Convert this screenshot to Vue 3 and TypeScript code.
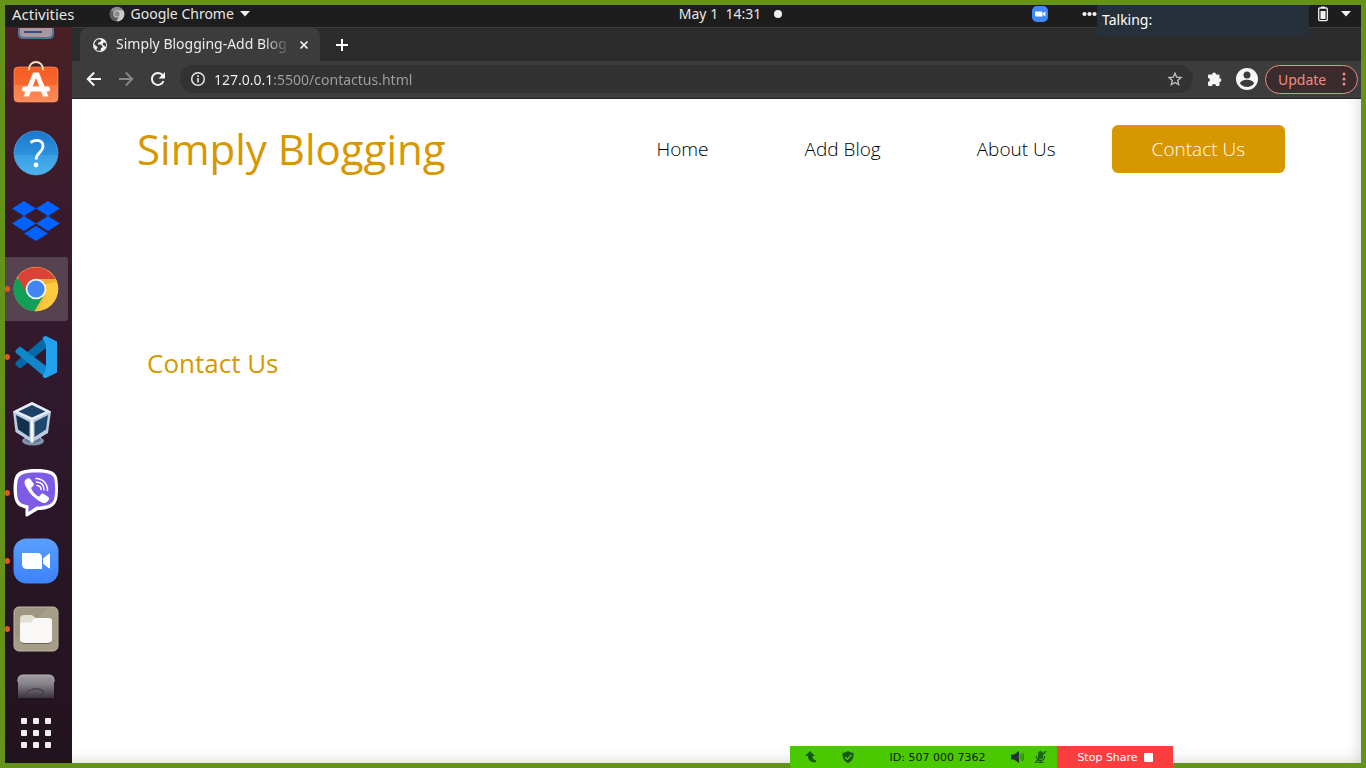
<script setup lang="ts">
import { ref } from 'vue'

interface NavLink {
  label: string
  href: string
  active?: boolean
}

const links: NavLink[] = [
  { label: 'Home', href: '#home' },
  { label: 'Add Blog', href: '#add' },
  { label: 'About Us', href: '#about' },
  { label: 'Contact Us', href: '#contact', active: true },
]

const address = ref('127.0.0.1:5500/contactus.html')
const gridDots = [0, 1, 2, 3, 4, 5, 6, 7, 8]
</script>

<template>
  <div class="screen">
    <header class="topbar">
      <div class="top-left">
        <button class="top-btn activities" type="button">Activities</button>
        <button class="top-btn app-menu" type="button">
          <svg width="16" height="16" viewBox="0 0 16 16" aria-hidden="true">
            <circle cx="8" cy="8" r="7.3" fill="#8c8c8c" />
            <path d="M8 8 1.8 4.2A7.3 7.3 0 0 0 7 15.2l3-5.2z" fill="#5e5e5e" />
            <path d="M8 4.5h6.4A7.3 7.3 0 0 1 7.6 15.3L11 9.5z" fill="#c9c9c9" />
            <circle cx="8" cy="8" r="3.6" fill="#d5d5d5" />
            <circle cx="8" cy="8" r="2.7" fill="#8a8a8a" />
          </svg>
          <span>Google Chrome</span>
          <svg width="10" height="6" viewBox="0 0 10 6" aria-hidden="true"><path d="M0 0h10L5 5.5z" fill="#f0f0f0" /></svg>
        </button>
      </div>
      <button class="top-btn clock" type="button">
        <span>May 1&nbsp; 14:31</span><i class="notice"></i>
      </button>
      <div class="top-right">
        <svg class="tray-zoom" width="16" height="16" viewBox="0 0 16 16" aria-hidden="true">
          <rect width="16" height="16" rx="5" fill="#4087fc" />
          <path d="M3 5.5h6.2c.8 0 1.3.5 1.3 1.3v3.7H4.4c-.8 0-1.4-.5-1.4-1.3zM11 7.3l2.4-1.7v4.8L11 8.8z" fill="#fff" />
        </svg>
        <svg class="tray-more" width="15" height="6" viewBox="0 0 15 6" aria-hidden="true">
          <g fill="#f2f2f2"><circle cx="2.5" cy="3" r="2.1" /><circle cx="7.5" cy="3" r="2.1" /><circle cx="12.5" cy="3" r="2.1" /></g>
        </svg>
        <svg width="10" height="16" viewBox="0 0 10 16" aria-hidden="true">
          <path d="M3 .5h4v1.5H3z" fill="#f2f2f2" />
          <rect x=".7" y="2" width="8.6" height="12.6" rx="1" fill="none" stroke="#f2f2f2" stroke-width="1.3" />
          <path d="M2.5 5h5v8h-5z" fill="#f2f2f2" />
        </svg>
        <svg width="10" height="6" viewBox="0 0 10 6" aria-hidden="true"><path d="M0 0h10L5 5.5z" fill="#f2f2f2" /></svg>
      </div>
    </header>

    <div class="desktop">
      <nav class="dock" aria-label="Dock">
        <button class="slot slot-top" type="button" aria-label="Writer">
          <svg width="48" height="14" viewBox="0 0 48 14">
            <path d="M6 0h36v6q0 5-5 5H11q-5 0-5-5z" fill="#4b7899" />
            <path d="M8 0h32v5q0 4-4 4H12q-4 0-4-4z" fill="#a9989f" />
            <path d="M12 3h18v2H12z" fill="#3b4c78" />
          </svg>
        </button>

        <button class="slot" type="button" aria-label="Ubuntu Software">
          <svg width="48" height="48" viewBox="0 0 48 48">
            <defs><linearGradient id="bag" x2="0" y2="1"><stop offset="0" stop-color="#f55c22" /><stop offset=".5" stop-color="#f8672e" /><stop offset=".51" stop-color="#f97b45" /><stop offset="1" stop-color="#fb8b58" /></linearGradient></defs>
            <rect x="2" y="6" width="44" height="35" rx="4" fill="url(#bag)" stroke="#ffa070" stroke-width=".6" />
            <path d="M17 8.500C17-1.500 31-1.500 31 8.500" fill="none" stroke="#fbe0b4" stroke-width="2" stroke-linecap="round" />
            <path d="M21 11.500h6l9.500 24H31L24 17l-7 18.500h-5.500z" fill="#fffaf6" />
            <rect x="10" y="25.500" width="28" height="5" rx="2.500" fill="#fff" />
          </svg>
        </button>

        <button class="slot" type="button" aria-label="Help">
          <svg width="48" height="48" viewBox="0 0 48 48">
            <defs><linearGradient id="help" x2="0" y2="1"><stop offset="0" stop-color="#1b77cf" /><stop offset=".54" stop-color="#2d92dd" /><stop offset=".55" stop-color="#399fe3" /><stop offset="1" stop-color="#4eb2ee" /></linearGradient></defs>
            <circle cx="24" cy="24" r="22" fill="url(#help)" stroke="#5db5ec" stroke-width=".6" />
            <path d="M18.500 13.500C24 9.500 31 11.500 31 17c0 6.200-7 7-6.800 13.500" fill="none" stroke="#fff" stroke-width="2.800" />
            <circle cx="24" cy="36" r="2.400" fill="#fff" />
          </svg>
        </button>

        <button class="slot" type="button" aria-label="Dropbox">
          <svg width="48" height="48" viewBox="0 0 48 48">
            <path d="m12 4 12 7.500L12 19 0 11.500zM36 4l12 7.500L36 19l-12-7.500zM12 19l12 7.500L12 34 0 26.500zM36 19l12 7.500L36 34l-12-7.500zM24 29l12 7.500L24 44l-12-7.500z" fill="#0062ff" />
          </svg>
        </button>

        <button class="slot running focused" type="button" aria-label="Google Chrome">
          <svg width="48" height="48" viewBox="0 0 48 48">
            <circle cx="24" cy="24" r="22.300" fill="#fecb40" />
            <path d="M24 24 4.500 13A22.300 22.300 0 0 0 22.500 46.200L31 32z" fill="#119e57" />
            <path d="M24 24 5.500 12A22.300 22.300 0 0 1 43.500 14H24z" fill="#dc4338" />
            <path d="M5.500 12 15 28.500 20 16z" fill="#dc4338" />
            <path d="M24 14h19.500l1 2.500L31 20z" fill="#e9a52b" opacity=".7" />
            <path d="m32 30-9.500 16.200h4L33 33z" fill="#e8b735" opacity=".7" />
            <circle cx="24" cy="24" r="10.300" fill="#f4f5f8" />
            <circle cx="24" cy="24" r="8.600" fill="#4285f4" />
          </svg>
        </button>

        <button class="slot running" type="button" aria-label="Visual Studio Code">
          <svg width="48" height="48" viewBox="0 0 48 48">
            <path d="M34 3v12L9.500 34.500q-1.500 1-3 0L4 32q-1.500-1.500 0-3z" fill="#0669aa" />
            <path d="m4 17 2.500-2.600q1.500-1.200 3 0L34 33v12L4 20q-1.500-1.500 0-3z" fill="#1186cb" />
            <path d="M34 3 45 8.500v31L34 45q-1.500.500-3.500-1.500L34 36V12l-3.500-7.500Q32.500 2.500 34 3z" fill="#22a1ef" />
          </svg>
        </button>

        <button class="slot" type="button" aria-label="VirtualBox">
          <svg width="48" height="48" viewBox="0 0 48 48">
            <ellipse cx="21" cy="40" rx="11" ry="4.500" fill="#8292a9" />
            <path d="M13 32h16v7q-8 4-16 0z" fill="#b9c5d5" />
            <ellipse cx="21" cy="38.500" rx="8" ry="3" fill="#5c7490" />
            <path d="M20 1 39 10.500 36 32 20 41.500 3.500 31 1 10.500z" fill="#bdcbe0" />
            <path d="M20 1 39 10.500 20 19.500 1 10.500z" fill="#e7edf6" />
            <path d="m20 4 13.500 6.500L20 16.500 6.500 10.500z" fill="#1d4166" />
            <path d="m4 14 13.500 7v15L6 28.500z" fill="#14304f" />
            <path d="M36 14 22.500 21v15L34 28.500z" fill="#1f486f" />
            <path d="M20 19.500v22" stroke="#fff" stroke-width="2.500" />
          </svg>
        </button>

        <button class="slot running" type="button" aria-label="Viber">
          <svg width="48" height="48" viewBox="0 0 48 48">
            <path d="M24 0C37 0 42 2 44.500 7 46.500 11 46.500 27 44.500 32 42 38.500 35 41 26 41L16 47q-2.500 1.500-2.500-1V39.500C7 38 4 35 3 31 1 25 1 12 3.500 7 6 2 12 0 24 0z" fill="#fff" />
            <path d="M24 3.500c12 0 16 1.500 18 5.500 1.500 4 1.500 17 0 21.500-2 5-8 7-17.500 7L16.500 43v-6.500C10.500 35.500 7 33.500 6 30c-1.500-5-1.500-17 .5-21C9 5 14 3.500 24 3.500z" fill="#7d5be6" />
            <path d="m13.500 10.800 2.500-1.500q1.500-.500 2.500 1l3 4q1 1.500-.5 3l-2 1.800c1.500 4 4.500 7 8 8.600l1.800-2.200q1.400-1.500 3-.5l4.500 3q1.500 1.200.5 2.700c-2 3.300-4.300 4-6.300 3-8-4-13.500-9.500-17.500-18-1-2.200-.5-3.800.5-4.900z" fill="#fff" />
            <path d="M24 9.500c7 .2 11.500 5 11.500 12M24.500 13c4.700.2 7.500 3 7.500 8M25 16.500c2.500.2 4 1.500 4 4" fill="none" stroke="#fff" stroke-width="1.500" stroke-linecap="round" />
          </svg>
        </button>

        <button class="slot running" type="button" aria-label="Zoom">
          <svg width="48" height="48" viewBox="0 0 48 48">
            <defs><linearGradient id="zm" x2="0" y2="1"><stop offset="0" stop-color="#589ffc" /><stop offset="1" stop-color="#3d82fb" /></linearGradient></defs>
            <rect x="1.500" y="1.500" width="45" height="45" rx="13" fill="url(#zm)" />
            <path d="M10 16h15q5 0 5 5v11H15q-5 0-5-5zM31 21.500l5.500-4.500q1.500-1 1.500.5v13q0 1.500-1.500.5L31 26.500z" fill="#fff" />
          </svg>
        </button>

        <button class="slot running" type="button" aria-label="Files">
          <svg width="48" height="48" viewBox="0 0 48 48">
            <rect x="2" y="2" width="44" height="44" rx="5" fill="#9e9680" stroke="#bfb8a3" />
            <path d="M3 35 36 3h8q1.500 1 1.500 3v35q-1 4-4 4H7q-4-1-4-4z" fill="#aaa28d" opacity=".6" />
            <path d="M8 14q0-4 4-4h7q1.500 0 3 1.500l2.500 2.500V19H8z" fill="#e2dfd2" />
            <path d="M8 20q0-2.500 2.500-2.500h8L23 13h14q3 0 3 3v18q0 4-4 4H12q-4 0-4-4z" fill="#f9f8f6" />
            <path d="M9 37q1 1.500 3 1.500h24q2 0 3-1.500" fill="none" stroke="#696452" />
          </svg>
        </button>

        <button class="slot slot-bottom" type="button" aria-label="Disks">
          <svg width="48" height="24" viewBox="0 0 48 24">
            <defs><linearGradient id="disk" x2="0" y2="1"><stop offset="0" stop-color="#a09da2" /><stop offset=".4" stop-color="#858188" /><stop offset="1" stop-color="#3c3340" /></linearGradient></defs>
            <path d="M6 24V6q0-5 5-5h26q5 0 5 5v18z" fill="url(#disk)" />
            <path d="M6 8V6q0-5 5-5h26q5 0 5 5v2" fill="none" stroke="#b5b2b6" />
            <path d="M12 23c4-10 16-10 20-5l-7 5" fill="none" stroke="#4a434e" stroke-width="1.500" />
          </svg>
        </button>

        <button class="apps" type="button" aria-label="Show Applications">
          <i v-for="d in gridDots" :key="d"></i>
        </button>
      </nav>

      <main class="browser">
        <div class="tabstrip">
          <div class="tab">
            <svg width="16" height="16" viewBox="0 0 16 16" aria-hidden="true">
              <circle cx="8" cy="8" r="7" fill="#f4f4f4" />
              <path d="M7 2.200 9.500 3 8 5.200 6.200 5.500 6 7.500H9l1.500 2v1L9 11l-.5 2.800C7 14.200 5 13.500 4 12.500L5.500 11 5 9.500 2.200 7.500C2.300 4.800 4.500 2.600 7 2.200zM11.500 5.500l2 .2c.6 1.300.7 3 .2 4.300L12 8.500l-1.500-1z" fill="#3c3c3c" />
            </svg>
            <span class="tab-title">Simply Blogging-Add Blog</span>
            <button class="icon-btn" type="button" aria-label="Close tab">
              <svg width="10" height="10" viewBox="0 0 10 10"><path d="m1.500 1.500 7 7m0-7-7 7" stroke="#f2f2f2" stroke-width="1.700" /></svg>
            </button>
          </div>
          <button class="icon-btn new-tab" type="button" aria-label="New tab">
            <svg width="12" height="12" viewBox="0 0 12 12"><path d="M6 0v12M0 6h12" stroke="#fff" stroke-width="2" /></svg>
          </button>
        </div>

        <div class="toolbar">
          <button class="icon-btn" type="button" aria-label="Back">
            <svg width="16" height="16" viewBox="0 0 16 16"><path d="M15 8H2.200M8.200 1.500 1.800 8l6.400 6.500" fill="none" stroke="#f5f5f5" stroke-width="2" /></svg>
          </button>
          <button class="icon-btn" type="button" aria-label="Forward">
            <svg width="16" height="16" viewBox="0 0 16 16"><path d="M1 8h12.800M7.800 1.500 14.200 8l-6.400 6.500" fill="none" stroke="#888" stroke-width="1.800" /></svg>
          </button>
          <button class="icon-btn" type="button" aria-label="Reload">
            <svg width="16" height="16" viewBox="0 0 16 16"><path d="M13.500 10.200A6 6 0 1 1 12.700 4.300L14 5.800" fill="none" stroke="#f5f5f5" stroke-width="2" /><path d="M15 1v6.500H8.500z" fill="#f5f5f5" /></svg>
          </button>
          <div class="omnibox">
            <svg width="16" height="16" viewBox="0 0 16 16" aria-hidden="true"><circle cx="8" cy="8" r="6.300" fill="none" stroke="#e8e8e8" stroke-width="1.500" /><path d="M7.200 7h1.600v4.500H7.200zM7.200 4.300h1.600v1.600H7.200z" fill="#e8e8e8" /></svg>
            <input v-model="address" class="url" type="text" aria-label="Address" spellcheck="false" />
            <button class="icon-btn" type="button" aria-label="Bookmark">
              <svg width="16" height="16" viewBox="0 0 16 16"><path d="m8 2.200 1.700 4 4.300.4-3.300 2.800 1 4.300L8 11.500l-3.700 2.200 1-4.300L2 6.600l4.300-.4z" fill="none" stroke="#c4c4c4" stroke-width="1.300" /></svg>
            </button>
          </div>
          <button class="icon-btn" type="button" aria-label="Extensions">
            <svg width="16" height="16" viewBox="0 0 16 16"><path d="M1 4.500Q1 3.500 2 3.500h3.200A1.900 1.900 0 1 1 9 3.500h2.500q1 0 1 1V7.200a1.900 1.900 0 1 1 0 3.800v3q0 1-1 1H9A1.900 1.900 0 0 0 5 15H2q-1 0-1-1v-3.200A1.900 1.900 0 0 0 1 7z" fill="#f5f5f5" /></svg>
          </button>
          <button class="icon-btn profile" type="button" aria-label="Profile">
            <svg width="22" height="22" viewBox="0 0 22 22"><circle cx="11" cy="11" r="11" fill="#f7f7f7" /><circle cx="11" cy="7" r="3.500" fill="#3c3c3c" /><path d="M4 15.500c1-5 13-5 14 0-3 4.500-11 4.500-14 0z" fill="#3c3c3c" /></svg>
          </button>
          <button class="update" type="button">
            <span>Update</span>
            <svg width="4" height="14" viewBox="0 0 4 14" aria-hidden="true"><g fill="#f28b82"><circle cx="2" cy="2" r="1.500" /><circle cx="2" cy="7" r="1.500" /><circle cx="2" cy="12" r="1.500" /></g></svg>
          </button>
        </div>

        <section class="page">
          <div class="site-head">
            <a class="brand" href="#home">Simply Blogging</a>
            <nav class="site-nav" aria-label="Site">
              <a v-for="l in links" :key="l.label" :href="l.href" :class="{ active: l.active }">{{ l.label }}</a>
            </nav>
          </div>
          <h1 class="heading">Contact Us</h1>
        </section>
      </main>
    </div>

    <div class="talking">Talking:</div>

    <div class="share">
      <div class="share-info">
        <svg class="s-net" width="12" height="12" viewBox="0 0 12 12" aria-hidden="true"><path d="M5 0 0 5h3c0 4 2.500 6 7 6.500l1.500-2C8.500 9 7.500 7.500 7.500 5H10z" fill="#145a14" /></svg>
        <svg width="12" height="12" viewBox="0 0 12 12" aria-hidden="true"><path d="M6 0c2 1.300 3.500 1.700 5.500 1.800C11.700 7 10.500 10 6 12 1.500 10 .3 7 .5 1.800 2.500 1.700 4 1.300 6 0z" fill="#195619" /><path d="m3 6 2.300 2.300L9.500 4" fill="none" stroke="#4bc900" stroke-width="1.400" /></svg>
        <span class="meeting">ID: 507 000 7362</span>
        <svg class="s-sound" width="13" height="12" viewBox="0 0 13 12" aria-hidden="true"><path d="M0 3.500h3L8 0v12L3 8.500H0z" fill="#24303a" /><path d="M9.500 3.500q1.500 2.500 0 5M11 2q3 4 0 8" fill="none" stroke="#2a7721" stroke-width="1.200" /></svg>
        <svg width="13" height="12" viewBox="0 0 13 12" aria-hidden="true"><rect x="4" y="0" width="5" height="8" rx="2.500" fill="#1b6919" /><path d="M2.500 5c0 6 8 6 8 0M6.500 9v2M3.500 11.500h6M12 0 1 12" fill="none" stroke="#1a5d1a" stroke-width="1.300" /></svg>
      </div>
      <button class="stop" type="button"><span>Stop Share</span><i></i></button>
    </div>
  </div>
</template>

<style>
html,
body {
  overflow: hidden;
}
</style>

<style scoped>
* {
  box-sizing: border-box;
}
.screen {
  position: relative;
  display: flex;
  flex-direction: column;
  height: 100vh;
  border: 5px solid #65931a;
  background: #1d1d1d;
  font-family: "Noto Sans", "Open Sans", sans-serif;
  font-size: 14px;
}
button {
  border: 0;
  padding: 0;
  background: none;
  font: inherit;
  color: inherit;
}
svg {
  display: block;
  flex: none;
}
.topbar {
  display: grid;
  grid-template-columns: 1fr auto 1fr;
  align-items: center;
  flex: none;
  height: 22px;
  padding: 0 10px 4px 7px;
  background: #1d1d1d;
  color: #e6e6e6;
}
.top-left,
.top-right,
.top-btn {
  display: flex;
  align-items: center;
}
.top-btn {
  line-height: 18px;
}
.top-left {
  gap: 34px;
}
.activities {
  font-size: 15px;
}
.app-menu {
  gap: 6px;
}
.clock {
  gap: 13px;
  padding-left: 98px;
}
.notice {
  width: 8px;
  height: 8px;
  border-radius: 50%;
  background: #f0f0f0;
}
.top-right {
  justify-content: flex-end;
  gap: 13px;
}
.tray-zoom {
  margin-right: 21px;
}
.tray-more {
  margin-right: 208px;
}
.desktop {
  display: flex;
  flex: 1;
  min-height: 0;
}
.dock {
  display: flex;
  flex-direction: column;
  gap: 4px;
  flex: none;
  width: 67px;
  background: linear-gradient(#4a2026, #3c1b2b 20%, #30182d 50%, #261523 80%, #21131e);
}
.slot {
  position: relative;
  display: flex;
  align-items: center;
  justify-content: center;
  flex: none;
  width: 63px;
  height: 64px;
  padding-right: 1px;
}
.slot-top {
  align-items: flex-start;
  height: 22px;
  padding-top: 1px;
}
.slot-bottom {
  align-items: flex-end;
  height: 33px;
}
.focused {
  border-radius: 0 3px 3px 0;
  background: #57424f;
}
.running::before {
  content: "";
  position: absolute;
  left: 0;
  top: 29px;
  width: 5px;
  height: 6px;
  border-radius: 2px 3px 3px 2px;
  background: #e95420;
}
.apps {
  display: grid;
  grid-template-columns: repeat(3, 6px);
  gap: 6px;
  justify-content: center;
  align-content: center;
  width: 62px;
  height: 66px;
}
.apps i {
  width: 6px;
  height: 6px;
  border-radius: 1px;
  background: #f1efee;
}
.browser {
  display: flex;
  flex-direction: column;
  flex: 1;
  min-width: 0;
  background: #3c3c3c;
}
.icon-btn {
  display: flex;
  align-items: center;
  justify-content: center;
  flex: none;
}
.tabstrip {
  display: flex;
  align-items: stretch;
  flex: none;
  height: 34px;
  padding-left: 8px;
  border-top: 1px solid #3d3d3d;
  background: #2c2c2c;
}
.tab {
  display: flex;
  align-items: center;
  width: 240px;
  padding: 0 11px 0 12px;
  border-radius: 8px 8px 0 0;
  background: #3c3c3c;
  color: #ececec;
}
.tab-title {
  flex: 1;
  min-width: 0;
  margin: 0 8px;
  padding-bottom: 2px;
  overflow: hidden;
  white-space: nowrap;
  mask-image: linear-gradient(90deg, #000 84%, transparent);
}
.new-tab {
  margin-left: 16px;
}
.toolbar {
  display: flex;
  align-items: center;
  gap: 16px;
  flex: none;
  height: 38px;
  padding: 0 3px 1px 14px;
  border-bottom: 1px solid #252525;
}
.omnibox {
  display: flex;
  align-items: center;
  gap: 8px;
  flex: 1;
  height: 28px;
  margin: 0 -2px;
  padding: 0 10px;
  border-radius: 14px;
  background: #323232;
}
.url {
  flex: 1;
  min-width: 0;
  height: 20px;
  padding: 0;
  border: 0;
  outline: 0;
  background: linear-gradient(90deg, #f4f4f4 59px, #a0a0a0 59px);
  background-clip: text;
  color: transparent;
  font: inherit;
}
.profile {
  margin: 0 -9px 0 -3px;
}
.update {
  display: flex;
  align-items: center;
  justify-content: space-between;
  flex: none;
  width: 93px;
  height: 29px;
  padding: 0 11px 0 12px;
  border: 1px solid #f28b82;
  border-radius: 15px;
  background: #3a2b2d;
  color: #f28b82;
}
.page {
  flex: 1;
  padding: 26px 76px 0 65px;
  background: #fff;
  box-shadow: inset -16px -16px 16px -16px rgba(0, 0, 0, 0.18);
  font-family: "Open Sans", "Noto Sans", sans-serif;
}
.site-head {
  display: flex;
  align-items: center;
  justify-content: space-between;
}
a {
  text-decoration: none;
  white-space: nowrap;
}
.brand {
  color: #d79700;
  font-size: 42px;
  line-height: 48px;
}
.site-nav {
  display: flex;
  gap: 16px;
}
.site-nav a {
  padding: 0 40px;
  border-radius: 6px;
  color: #000;
  font-size: 19px;
  font-weight: 300;
  line-height: 48px;
}
.site-nav .active {
  background: #d79700;
  color: #fff;
}
.heading {
  margin: 172px 0 0 10px;
  color: #d79700;
  font-size: 26px;
  font-weight: 400;
  line-height: 36px;
}
.talking {
  position: absolute;
  top: 0;
  right: 52px;
  width: 212px;
  height: 31px;
  padding-left: 5px;
  background: #26303b;
  color: #fff;
  font-size: 14px;
  line-height: 30px;
}
.share {
  position: absolute;
  right: 188px;
  bottom: -5px;
  display: flex;
  height: 22px;
  font-family: "DejaVu Sans", sans-serif;
  font-size: 11px;
}
.share-info {
  display: flex;
  align-items: center;
  width: 267px;
  padding: 0 10px 0 15px;
  border-radius: 0 0 0 3px;
  background: #4bc900;
  color: #0a1a05;
}
.s-net {
  margin-right: 25px;
}
.meeting {
  flex: 1;
  padding-left: 10px;
  text-align: center;
}
.s-sound {
  margin-right: 10px;
}
.stop {
  display: flex;
  align-items: center;
  justify-content: center;
  gap: 6px;
  width: 116px;
  background: #fc3d3d;
  color: #fff;
}
.stop i {
  width: 9px;
  height: 9px;
  border-radius: 1px;
  background: #fff;
}
</style>
